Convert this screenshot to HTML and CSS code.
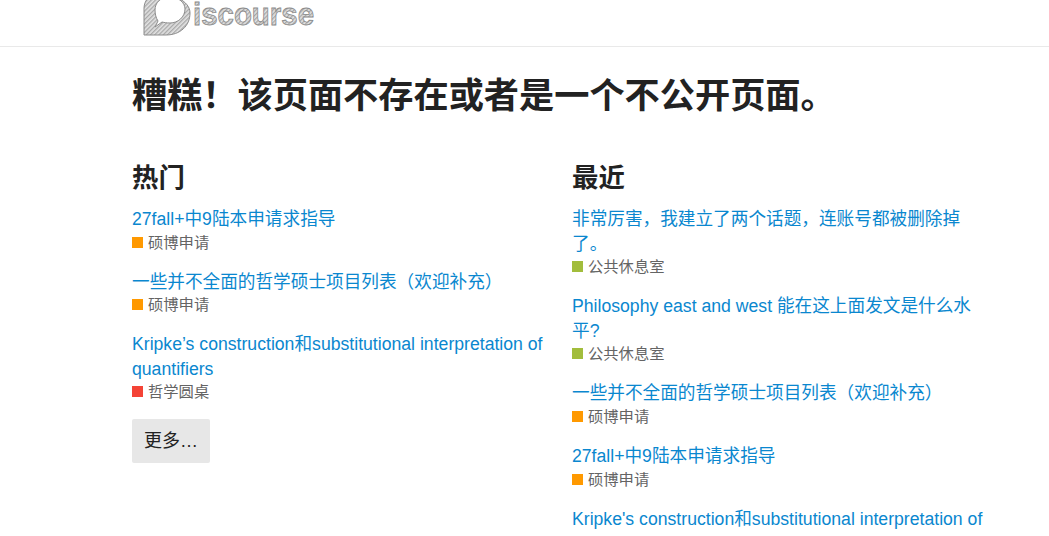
FILE: index.html
```html
<!DOCTYPE html>
<html lang="zh-CN">
<head>
<meta charset="utf-8">
<title>Discourse</title>
<link rel="stylesheet" href="styles.css">
</head>
<body>
<header class="site-header">
  <div class="wrap">
    <svg class="logo" width="180" height="46" viewBox="0 0 180 46" aria-label="Discourse">
      <defs>
        <pattern id="hatch" width="3" height="3" patternUnits="userSpaceOnUse" patternTransform="rotate(-45)">
          <rect width="3" height="3" fill="#e2e2e2"/>
          <rect width="3" height="1.300" fill="#a8a8a8"/>
        </pattern>
      </defs>
      <path fill="url(#hatch)" stroke="#8c8c8c" stroke-width="1" fill-rule="evenodd" d="M2 35V8C2 4 4 0 6 -2H36C44 2 48 7 48 13C48 26 38 35 24 35ZM13 27L16 21C14 18 13 14 13 10C13 3 18 -3 28 -3C37 -3 43 3 43 9C43 17 36 23 28 23C25 23 22 22.500 20 22Z"/>
      <text class="logo-text" x="51" y="25" textLength="121" lengthAdjust="spacingAndGlyphs">iscourse</text>
    </svg>
  </div>
</header>
<main class="wrap page">
  <h1 class="title">糟糕！该页面不存在或者是一个不公开页面。</h1>
  <div class="columns">
    <section class="col">
      <h2 class="col-title">热门</h2>
      <div class="topic"><a class="topic-link" href="#">27fall+中9陆本申请求指导</a><div class="cat"><span class="sq sq-orange"></span>硕博申请</div></div>
      <div class="topic"><a class="topic-link" href="#">一些并不全面的哲学硕士项目列表（欢迎补充）</a><div class="cat"><span class="sq sq-orange"></span>硕博申请</div></div>
      <div class="topic"><a class="topic-link" href="#">Kripke’s construction和substitutional interpretation of quantifiers</a><div class="cat"><span class="sq sq-red"></span>哲学圆桌</div></div>
      <a class="more" href="#">更多…</a>
    </section>
    <section class="col">
      <h2 class="col-title">最近</h2>
      <div class="topic"><a class="topic-link" href="#">非常厉害，我建立了两个话题，连账号都被删除掉了。</a><div class="cat"><span class="sq sq-green"></span>公共休息室</div></div>
      <div class="topic"><a class="topic-link" href="#">Philosophy east and west 能在这上面发文是什么水平?</a><div class="cat"><span class="sq sq-green"></span>公共休息室</div></div>
      <div class="topic"><a class="topic-link" href="#">一些并不全面的哲学硕士项目列表（欢迎补充）</a><div class="cat"><span class="sq sq-orange"></span>硕博申请</div></div>
      <div class="topic"><a class="topic-link" href="#">27fall+中9陆本申请求指导</a><div class="cat"><span class="sq sq-orange"></span>硕博申请</div></div>
      <div class="topic"><a class="topic-link" href="#">Kripke's construction和substitutional interpretation of quantifiers</a><div class="cat"><span class="sq sq-red"></span>哲学圆桌</div></div>
    </section>
  </div>
</main>
</body>
</html>
```
FILE: styles.css
```css
html { overflow: hidden; height: 100%; }
body {
  margin: 0;
  height: 536px;
  overflow: hidden;
  background: #fff;
  color: #222;
  font-family: "Liberation Sans", "Noto Sans CJK SC", sans-serif;
  font-size: 14px;
}
.wrap { margin-left: 132px; width: 860px; }
.site-header { height: 46px; border-bottom: 1px solid #e9e9e9; overflow: hidden; }
.logo { display: block; margin-left: 10px; }
.logo-text {
  font-family: "Liberation Sans", sans-serif;
  font-size: 31px;
  font-weight: 700;
  fill: url(#hatch);
  stroke: #8a8a8a;
  stroke-width: 0.8;
}
.page { padding-top: 1px; }
.title { margin: 27px 0 0; font-size: 35.2px; line-height: 42px; font-weight: 700; color: #222; }
.columns { display: grid; grid-template-columns: 420px 420px; column-gap: 20px; margin-top: 46px; }
.col-title { margin: 0 0 13px; font-size: 26.4px; line-height: 31px; font-weight: 700; color: #222; }
.topic { margin-bottom: 17px; }
.topic-link { display: block; font-size: 17.65px; line-height: 24.6px; color: #0a87cf; text-decoration: none; }
.cat { display: flex; align-items: center; font-size: 15.3px; line-height: 21px; color: #646464; }
.sq { width: 11px; height: 11px; margin-right: 5px; flex: none; }
.sq-orange { background: #ff9900; }
.sq-green { background: #a2bd3c; }
.sq-red { background: #f44336; }
.more {
  display: inline-block;
  padding: 0 12px;
  margin-top: -0.5px;
  height: 44px;
  line-height: 45px;
  font-size: 18px;
  color: #222;
  background: #e7e7e7;
  border-radius: 2px;
  text-decoration: none;
}
```
